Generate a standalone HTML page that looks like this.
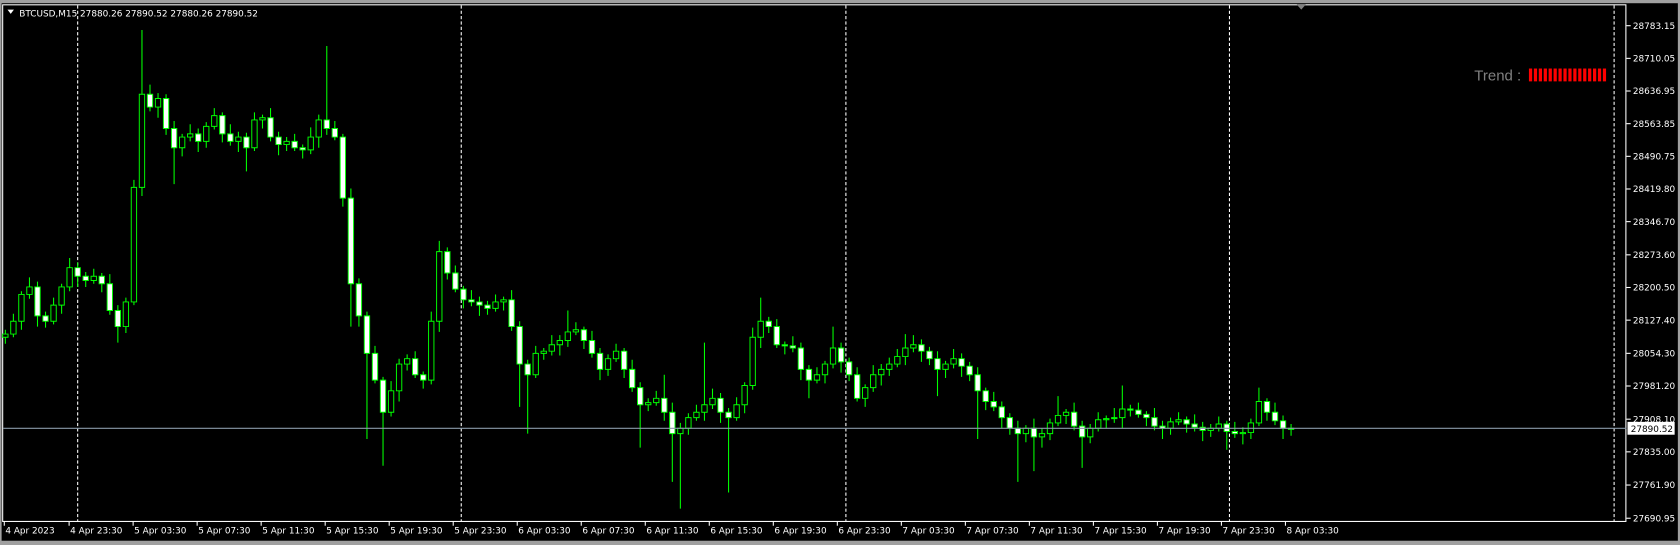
<!DOCTYPE html>
<html><head><meta charset="utf-8"><style>
html,body{margin:0;padding:0;background:#000;width:1680px;height:545px;overflow:hidden}
svg{display:block}
text{font-family:"DejaVu Sans","Liberation Sans",sans-serif;font-size:8.3px;fill:#fff}
</style></head><body>
<svg width="1680" height="545" viewBox="0 0 1568 509" preserveAspectRatio="none">
<rect x="0" y="0" width="1568" height="509" fill="#000"/>
<rect x="0" y="0" width="1568" height="3" fill="#a0a0a0"/>
<rect x="0" y="505" width="1568" height="4" fill="#a0a0a0"/>
<rect x="0" y="0" width="1.5" height="509" fill="#a0a0a0"/>
<rect x="1566" y="0" width="2" height="509" fill="#a0a0a0"/>
<rect x="2.5" y="4.5" width="1515" height="482.5" fill="none" stroke="#fff" stroke-width="1"/>
<polygon points="1210,4 1219,4 1214.5,9" fill="#808080"/>
<g stroke="#fff" stroke-width="1" stroke-dasharray="3,2">
<line x1="72.5" y1="5" x2="72.5" y2="487"/>
<line x1="430.5" y1="5" x2="430.5" y2="487"/>
<line x1="789.5" y1="5" x2="789.5" y2="487"/>
<line x1="1147.5" y1="5" x2="1147.5" y2="487"/>
<line x1="1506.5" y1="5" x2="1506.5" y2="487"/>
</g>
<path stroke="#00ff00" stroke-width="1" fill="none" d="M5 308V321M12.5 293V315M20 272V308M27.5 259V279M35 263V305M42.5 291V306M50 278V303M57.5 265V293M65 241V272M72.5 245V268M80 254V268M87.5 251V265M95 255V273M102.5 256V294M110 285V320M117.5 278V311M125 168V285M132.5 28V183M140 79V104M147.5 87V110M155 88V126M162.5 113V172M170 125V146M177.5 116V132M185 120V142M192.5 114V138M200 101V121M207.5 105V133M215 116V136M222.5 123V142M230 124V160M237.5 105V141M245 107V120M252.5 101V132M260 123V145M267.5 128V141M275 125V141M282.5 135V148M290 119V144M297.5 107V138M305 43V126M312.5 113V131M320 125V193M327.5 176V305M335 260V305M342.5 291V410M350 323V358M357.5 352V435M365 356V389M372.5 335V375M380 331V346M387.5 328V353M395 347V363M402.5 291V359M410 225V310M417.5 231V261M425 248V273M432.5 267V288M440 271V286M447.5 277V295M455 281V294M462.5 275V291M470 277V290M477.5 271V309M485 300V380M492.5 336V405M500 323V353M507.5 325V336M515 313V332M522.5 313V332M530 290V324M537.5 301V313M545 305V326M552.5 309V334M560 325V355M567.5 331V351M575 321V338M582.5 325V353M590 336V366M597.5 357V418M605 372V384M612.5 365V379M620 350V393M627.5 376V450M635 395V475M642.5 386V406M650 378V393M657.5 320V393M665 363V382M672.5 367V395M680 381V460M687.5 371V393M695 357V386M702.5 306V364M710 278V325M717.5 296V311M725 298V325M732.5 319V331M740 314V329M747.5 320V355M755 341V372M762.5 343V358M770 337V358M777.5 305V344M785 320V348M792.5 334V356M800 343V375M807.5 359V380M815 341V366M822.5 340V360M830 334V351M837.5 326V343M845 312V341M852.5 313V329M860 317V338M867.5 324V341M875 328V370M882.5 337V353M890 326V344M897.5 330V352M905 338V356M912.5 343V410M920 362V383M927.5 366V384M935 375V400M942.5 386V406M950 393V450M957.5 397V413M965 391V440M972.5 400V418M980 391V411M987.5 370V398M995 382V396M1002.5 376V402M1010 393V437M1017.5 396V414M1025 385V403M1032.5 388V400M1040 381V395M1047.5 360V400M1055 378V389M1062.5 376V390M1070 384V398M1077.5 381V402M1085 393V410M1092.5 390V406M1100 385V397M1107.5 389V404M1115 387V403M1122.5 394V412M1130 396V408M1137.5 389V403M1145 393V420M1152.5 394V409M1160 399V415M1167.5 391V410M1175 362V398M1182.5 372V393M1190 376V397M1197.5 388V410M1205 396V407"/>
<path stroke="#00ff00" stroke-width="0.9" fill="#000" d="M2.5 312h5V315h-5zM10 300h5V312h-5zM17.5 275h5V300h-5zM25 268h5V275h-5zM47.5 285h5V300h-5zM55 268h5V285h-5zM62.5 250h5V268h-5zM85 258h5V262h-5zM115 282h5V305h-5zM122.5 175h5V282h-5zM130 88h5V175h-5zM145 92h5V100h-5zM167.5 128h5V138h-5zM175 125h5V128h-5zM190 118h5V132h-5zM197.5 108h5V118h-5zM220 128h5V132h-5zM235 112h5V138h-5zM242.5 110h5V112h-5zM265 132h5V135h-5zM287.5 128h5V140h-5zM295 112h5V128h-5zM362.5 365h5V385h-5zM370 340h5V365h-5zM377.5 335h5V340h-5zM400 300h5V355h-5zM407.5 235h5V300h-5zM460 282h5V288h-5zM467.5 280h5V282h-5zM497.5 330h5V350h-5zM505 328h5V330h-5zM512.5 322h5V328h-5zM520 318h5V322h-5zM527.5 310h5V318h-5zM535 308h5V310h-5zM565 335h5V345h-5zM572.5 328h5V335h-5zM602.5 376h5V378h-5zM610 372h5V376h-5zM632.5 400h5V405h-5zM640 390h5V400h-5zM647.5 385h5V390h-5zM655 378h5V385h-5zM662.5 372h5V378h-5zM685 378h5V390h-5zM692.5 360h5V378h-5zM700 315h5V360h-5zM707.5 300h5V315h-5zM760 350h5V355h-5zM767.5 340h5V350h-5zM775 325h5V340h-5zM805 362h5V372h-5zM812.5 350h5V362h-5zM820 345h5V350h-5zM827.5 340h5V345h-5zM835 333h5V340h-5zM842.5 325h5V333h-5zM850 322h5V325h-5zM880 340h5V345h-5zM887.5 335h5V340h-5zM955 400h5V405h-5zM970 405h5V408h-5zM977.5 395h5V405h-5zM985 388h5V395h-5zM992.5 385h5V388h-5zM1015 400h5V408h-5zM1022.5 392h5V400h-5zM1030 391h5V392h-5zM1037.5 390h5V391h-5zM1045 382h5V390h-5zM1090 394h5V400h-5zM1097.5 392h5V394h-5zM1127.5 400h5V402h-5zM1135 396h5V400h-5zM1157.5 404h5V405h-5zM1165 395h5V404h-5zM1172.5 375h5V395h-5z"/>
<path stroke="#00ff00" stroke-width="0.9" fill="#fff" d="M32.5 268h5V295h-5zM40 295h5V300h-5zM70 250h5V258h-5zM77.5 258h5V262h-5zM92.5 258h5V265h-5zM100 265h5V290h-5zM107.5 290h5V305h-5zM137.5 88h5V100h-5zM152.5 92h5V120h-5zM160 120h5V138h-5zM182.5 125h5V132h-5zM205 108h5V125h-5zM212.5 125h5V132h-5zM227.5 128h5V138h-5zM250 110h5V128h-5zM257.5 128h5V135h-5zM272.5 132h5V138h-5zM280 138h5V140h-5zM302.5 112h5V120h-5zM310 120h5V128h-5zM317.5 128h5V185h-5zM325 185h5V265h-5zM332.5 265h5V295h-5zM340 295h5V330h-5zM347.5 330h5V355h-5zM355 355h5V385h-5zM385 335h5V350h-5zM392.5 350h5V355h-5zM415 235h5V255h-5zM422.5 255h5V270h-5zM430 270h5V280h-5zM437.5 280h5V282h-5zM445 282h5V285h-5zM452.5 285h5V288h-5zM475 280h5V305h-5zM482.5 305h5V340h-5zM490 340h5V350h-5zM542.5 308h5V318h-5zM550 318h5V330h-5zM557.5 330h5V345h-5zM580 328h5V345h-5zM587.5 345h5V362h-5zM595 362h5V378h-5zM617.5 372h5V385h-5zM625 385h5V405h-5zM670 372h5V385h-5zM677.5 385h5V390h-5zM715 300h5V305h-5zM722.5 305h5V322h-5zM730 322h5V323h-5zM737.5 323h5V325h-5zM745 325h5V345h-5zM752.5 345h5V355h-5zM782.5 325h5V338h-5zM790 338h5V350h-5zM797.5 350h5V372h-5zM857.5 322h5V328h-5zM865 328h5V335h-5zM872.5 335h5V345h-5zM895 335h5V342h-5zM902.5 342h5V350h-5zM910 350h5V365h-5zM917.5 365h5V375h-5zM925 375h5V380h-5zM932.5 380h5V390h-5zM940 390h5V400h-5zM947.5 400h5V405h-5zM962.5 400h5V408h-5zM1000 385h5V398h-5zM1007.5 398h5V408h-5zM1052.5 382h5V383h-5zM1060 383h5V387h-5zM1067.5 387h5V390h-5zM1075 390h5V398h-5zM1082.5 398h5V400h-5zM1105 392h5V396h-5zM1112.5 396h5V399h-5zM1120 399h5V402h-5zM1142.5 396h5V403h-5zM1150 403h5V405h-5zM1180 375h5V385h-5zM1187.5 385h5V393h-5zM1195 393h5V400h-5zM1202.5 400h5V401h-5z"/>
<line x1="3" y1="400" x2="1518" y2="400" stroke="#8a9aa8" stroke-width="1"/>
<polygon points="7,9 13,9 10,13" fill="#fff"/>
<text x="18" y="15.5">BTCUSD,M15  27880.26 27890.52 27880.26 27890.52</text>
<text x="1376" y="75" style="font-size:14px;fill:#808080;font-family:'Liberation Sans',sans-serif">Trend :</text>
<g fill="#ff0000">
<rect x="1427" y="64" width="3" height="12"/><rect x="1431.6" y="64" width="3" height="12"/><rect x="1436.2" y="64" width="3" height="12"/><rect x="1440.8" y="64" width="3" height="12"/><rect x="1445.4" y="64" width="3" height="12"/><rect x="1450" y="64" width="3" height="12"/><rect x="1454.6" y="64" width="3" height="12"/><rect x="1459.2" y="64" width="3" height="12"/><rect x="1463.8" y="64" width="3" height="12"/><rect x="1468.4" y="64" width="3" height="12"/><rect x="1473" y="64" width="3" height="12"/><rect x="1477.6" y="64" width="3" height="12"/><rect x="1482.2" y="64" width="3" height="12"/><rect x="1486.8" y="64" width="3" height="12"/><rect x="1491.4" y="64" width="3" height="12"/><rect x="1496" y="64" width="3" height="12"/>
</g>
<g stroke="#fff">
<line x1="1518" x2="1522" y1="24" y2="24"/><line x1="1518" x2="1522" y1="54.5" y2="54.5"/><line x1="1518" x2="1522" y1="85" y2="85"/><line x1="1518" x2="1522" y1="115.5" y2="115.5"/><line x1="1518" x2="1522" y1="146" y2="146"/><line x1="1518" x2="1522" y1="176.5" y2="176.5"/><line x1="1518" x2="1522" y1="207" y2="207"/><line x1="1518" x2="1522" y1="238" y2="238"/><line x1="1518" x2="1522" y1="268.5" y2="268.5"/><line x1="1518" x2="1522" y1="299" y2="299"/><line x1="1518" x2="1522" y1="330" y2="330"/><line x1="1518" x2="1522" y1="360.5" y2="360.5"/><line x1="1518" x2="1522" y1="391.5" y2="391.5"/><line x1="1518" x2="1522" y1="422" y2="422"/><line x1="1518" x2="1522" y1="453" y2="453"/><line x1="1518" x2="1522" y1="484" y2="484"/>
</g>
<text x="1524" y="27">28783.15</text><text x="1524" y="57.5">28710.05</text><text x="1524" y="88">28636.95</text><text x="1524" y="118.5">28563.85</text><text x="1524" y="149">28490.75</text><text x="1524" y="179.5">28419.80</text><text x="1524" y="210">28346.70</text><text x="1524" y="241">28273.60</text><text x="1524" y="271.5">28200.50</text><text x="1524" y="302">28127.40</text><text x="1524" y="333">28054.30</text><text x="1524" y="363.5">27981.20</text><text x="1524" y="394.5">27908.10</text><text x="1524" y="425">27835.00</text><text x="1524" y="456">27761.90</text><text x="1524" y="487">27690.95</text>
<rect x="1519" y="394" width="44" height="12" fill="#fff"/>
<text x="1522" y="403.5" style="fill:#000">27890.52</text>
<g stroke="#fff">
<line x1="4" x2="4" y1="487" y2="491"/><line x1="64.5" x2="64.5" y1="487" y2="491"/><line x1="124.25" x2="124.25" y1="487" y2="491"/><line x1="184" x2="184" y1="487" y2="491"/><line x1="243.75" x2="243.75" y1="487" y2="491"/><line x1="303.5" x2="303.5" y1="487" y2="491"/><line x1="363.25" x2="363.25" y1="487" y2="491"/><line x1="423" x2="423" y1="487" y2="491"/><line x1="482.75" x2="482.75" y1="487" y2="491"/><line x1="542.5" x2="542.5" y1="487" y2="491"/><line x1="602.25" x2="602.25" y1="487" y2="491"/><line x1="662" x2="662" y1="487" y2="491"/><line x1="721.75" x2="721.75" y1="487" y2="491"/><line x1="781.5" x2="781.5" y1="487" y2="491"/><line x1="841.25" x2="841.25" y1="487" y2="491"/><line x1="901" x2="901" y1="487" y2="491"/><line x1="960.75" x2="960.75" y1="487" y2="491"/><line x1="1020.5" x2="1020.5" y1="487" y2="491"/><line x1="1080.25" x2="1080.25" y1="487" y2="491"/><line x1="1140" x2="1140" y1="487" y2="491"/><line x1="1199.75" x2="1199.75" y1="487" y2="491"/>
</g>
<text x="5" y="498.5">4 Apr 2023</text><text x="65.5" y="498.5">4 Apr 23:30</text><text x="125.25" y="498.5">5 Apr 03:30</text><text x="185" y="498.5">5 Apr 07:30</text><text x="244.75" y="498.5">5 Apr 11:30</text><text x="304.5" y="498.5">5 Apr 15:30</text><text x="364.25" y="498.5">5 Apr 19:30</text><text x="424" y="498.5">5 Apr 23:30</text><text x="483.75" y="498.5">6 Apr 03:30</text><text x="543.5" y="498.5">6 Apr 07:30</text><text x="603.25" y="498.5">6 Apr 11:30</text><text x="663" y="498.5">6 Apr 15:30</text><text x="722.75" y="498.5">6 Apr 19:30</text><text x="782.5" y="498.5">6 Apr 23:30</text><text x="842.25" y="498.5">7 Apr 03:30</text><text x="902" y="498.5">7 Apr 07:30</text><text x="961.75" y="498.5">7 Apr 11:30</text><text x="1021.5" y="498.5">7 Apr 15:30</text><text x="1081.25" y="498.5">7 Apr 19:30</text><text x="1141" y="498.5">7 Apr 23:30</text><text x="1200.75" y="498.5">8 Apr 03:30</text>
</svg>
</body></html>
